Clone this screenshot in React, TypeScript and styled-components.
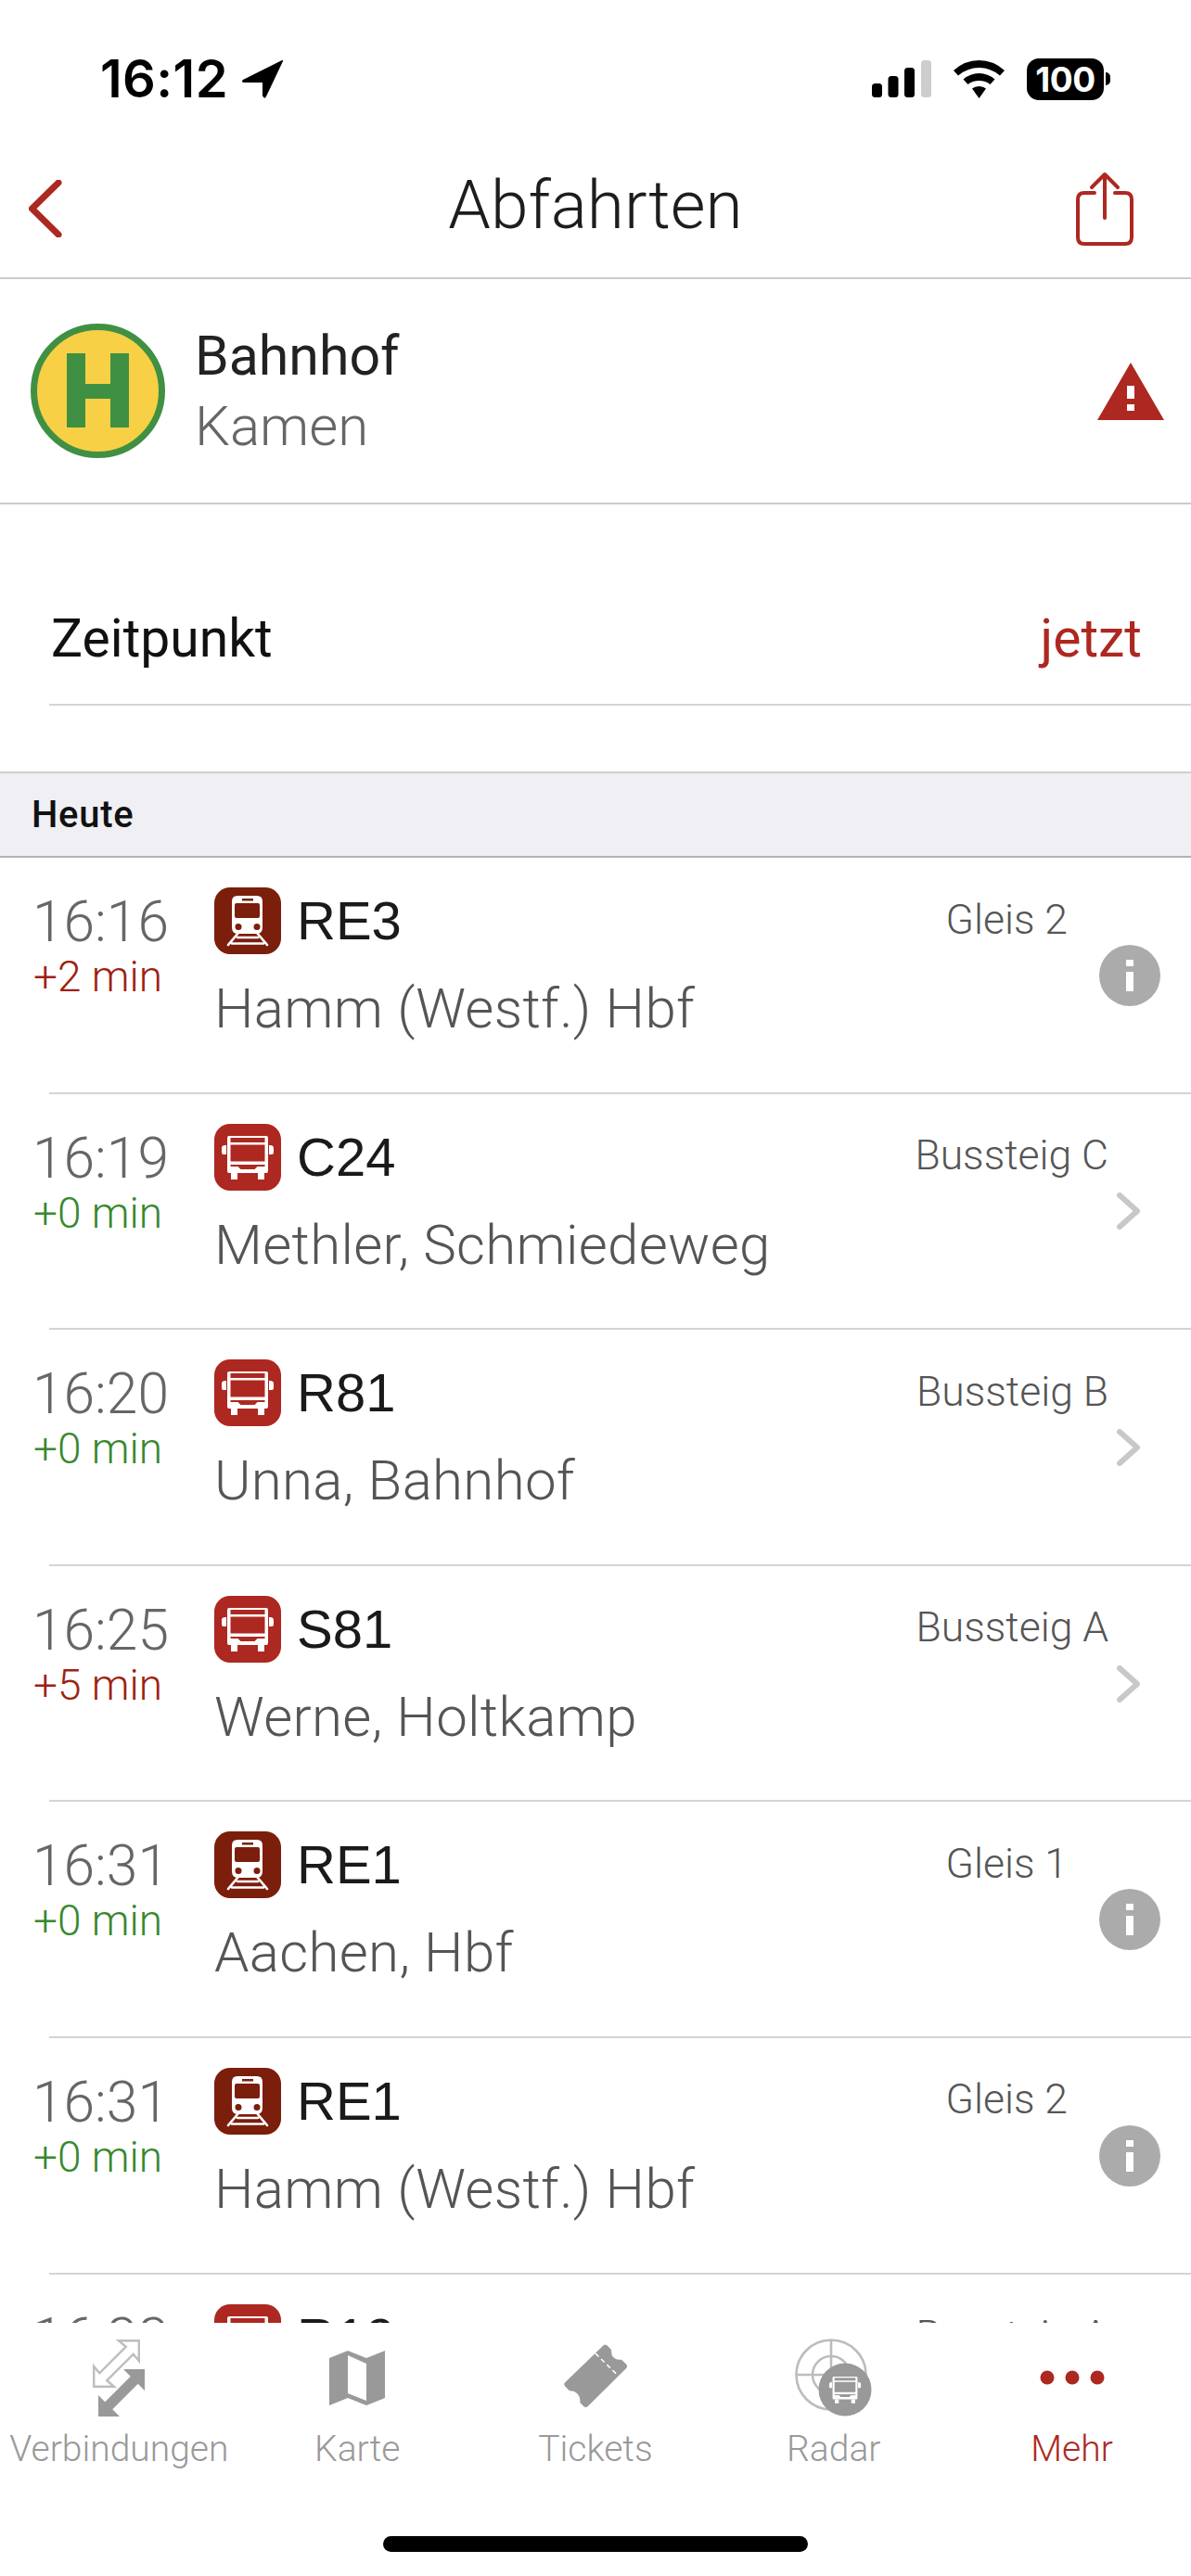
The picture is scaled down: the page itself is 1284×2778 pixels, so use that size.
import styled, { createGlobalStyle } from "styled-components"

const RED = "#ad2821"

const GlobalStyle = createGlobalStyle`
   html, body {
      margin: 0;
      padding: 0;
      background: white;
   }
   body {
      font-family: Roboto, "Liberation Sans", sans-serif;
      font-weight: 300;
   }
`

const Page = styled.div`
   width: 1284px;
   height: 2778px;
   display: flex;
   flex-direction: column;
   overflow: hidden;
   background: white;
`

/* Status bar */
const StatusBar = styled.div`
   height: 170px;
   flex: none;
   box-sizing: border-box;
   padding: 0 87px 0 108px;
   display: flex;
   align-items: center;
   justify-content: space-between;
`
const StatusLeft = styled.div`
   display: flex;
   align-items: center;
   gap: 14px;
`
const Clock = styled.span`
   font-family: Inter, sans-serif;
   font-weight: 600;
   font-size: 56px;
   letter-spacing: 0.4px;
   color: black;
`
const StatusRight = styled.div`
   display: flex;
   align-items: center;
   gap: 24px;
`
const BatteryWrap = styled.div`
   display: flex;
   align-items: center;
   gap: 2px;
`
const Battery = styled.div`
   width: 83px;
   height: 45px;
   border-radius: 13px;
   background: black;
   color: white;
   display: flex;
   align-items: center;
   justify-content: center;
   font-family: Inter, sans-serif;
   font-weight: 700;
   font-size: 37px;
   letter-spacing: -0.5px;
`
const BatteryNub = styled.div`
   width: 5px;
   height: 14px;
   border-radius: 0 7px 7px 0;
   background: black;
`

/* Navigation */
const NavBar = styled.div`
   height: 131px;
   flex: none;
   box-sizing: border-box;
   padding: 0 0 20px;
   display: grid;
   grid-template-columns: 1fr auto 1fr;
   align-items: center;
   border-bottom: 2px solid #cbcbcb;
`
const NavSide = styled.div<{ $end?: boolean }>`
   display: flex;
   justify-content: ${props => (props.$end ? "flex-end" : "flex-start")};
   padding: 0 ${props => (props.$end ? "62px" : "0")} 0 ${props => (props.$end ? "0" : "31px")};
`
const NavTitle = styled.h1`
   margin: 0 0 8px;
   font-size: 73px;
   font-weight: 300;
   color: #1d1d1d;
`

/* Station header */
const StationHeader = styled.div`
   height: 243px;
   flex: none;
   box-sizing: border-box;
   padding: 0 29px 0 33px;
   display: flex;
   align-items: center;
   border-bottom: 2px solid #cbcbcb;
`
const StationNames = styled.div`
   flex: 1;
   margin-left: 32px;
   display: flex;
   flex-direction: column;
`
const StationName = styled.span`
   font-size: 59px;
   line-height: 76px;
   font-weight: 400;
   color: #222;
`
const StationCity = styled.span`
   font-size: 60px;
   line-height: 76px;
   color: #666;
`

/* Zeitpunkt */
const TimeRow = styled.div`
   height: 215px;
   flex: none;
   box-sizing: border-box;
   padding: 107px 53px 0 55px;
   display: flex;
   align-items: flex-start;
   justify-content: space-between;
   font-size: 57px;
   line-height: 76px;
`
const TimeLabel = styled.span`
   color: #111;
   font-weight: 400;
`
const TimeValue = styled.span`
   color: ${RED};
   font-weight: 400;
`
const Divider = styled.div`
   height: 2px;
   flex: none;
   margin-left: 53px;
   background: #d4d4d4;
`
const SectionGap = styled.div`
   height: 71px;
   flex: none;
`
const SectionHeader = styled.div`
   height: 93px;
   flex: none;
   box-sizing: border-box;
   padding-left: 34px;
   display: flex;
   align-items: center;
   background: #efeff4;
   border-top: 2px solid #cfcfcf;
   border-bottom: 2px solid #b2b2b2;
   font-size: 40px;
   letter-spacing: 0.7px;
   font-weight: 500;
   color: #111;
`

/* Departures */
const List = styled.div`
   flex: 1;
   min-height: 0;
   overflow: hidden;
`
const Row = styled.div`
   height: 252.6px;
   box-sizing: border-box;
   padding: 32px 0 0 35px;
   display: flex;
`
const TimeCol = styled.div`
   width: 196px;
   flex: none;
   display: flex;
   flex-direction: column;
`
const Departure = styled.span`
   font-size: 60.5px;
   line-height: 76px;
   color: #666;
`
const Delay = styled.span<{ $late: boolean }>`
   margin-top: -3px;
   padding-left: 1px;
   font-size: 46px;
   line-height: 46px;
   font-weight: 300;
   color: ${props => (props.$late ? "#a01f12" : "#38882f")};
`
const MainCol = styled.div`
   flex: 1;
   min-width: 0;
   display: flex;
   flex-direction: column;
`
const TopLine = styled.div`
   height: 72px;
   display: flex;
   align-items: center;
`
const Badge = styled.div<{ $kind: "train" | "bus" }>`
   width: 72px;
   height: 72px;
   flex: none;
   border-radius: 17px;
   background: ${props => (props.$kind === "train" ? "#7b1e0c" : RED)};
   display: flex;
   align-items: center;
   justify-content: center;
`
const LineName = styled.span`
   margin-left: 17px;
   flex: 1;
   font-family: "Liberation Sans", sans-serif;
   font-size: 58px;
   line-height: 72px;
   font-weight: 400;
   color: #1a1a1a;
`
const Platform = styled.span`
   font-size: 44.5px;
   line-height: 72px;
   margin-bottom: 3px;
   color: #555;
`
const Destination = styled.div`
   margin-top: 25px;
   font-size: 60px;
   letter-spacing: 0.3px;
   line-height: 68px;
   color: #555;
   white-space: nowrap;
`
const Accessory = styled.div<{ $kind: "info" | "more" }>`
   width: ${props => (props.$kind === "info" ? "66px" : "25px")};
   margin: ${props => (props.$kind === "info" ? "0 33px 0 34px" : "0 55px 0 9px")};
   flex: none;
   align-self: stretch;
   padding-bottom: 31px;
   display: flex;
   align-items: center;
   justify-content: center;
`
const InfoDot = styled.div`
   width: 66px;
   height: 66px;
   border-radius: 50%;
   background: #ababab;
   display: flex;
   align-items: center;
   justify-content: center;
`

/* Tab bar */
const TabBar = styled.div`
   height: 273px;
   flex: none;
   box-sizing: border-box;
   padding: 17px 0 26px;
   display: flex;
   flex-direction: column;
   align-items: center;
   background: white;
`
const Tabs = styled.div`
   width: 100%;
   display: grid;
   grid-template-columns: repeat(5, 1fr);
`
const Tab = styled.div<{ $active?: boolean }>`
   display: flex;
   flex-direction: column;
   align-items: center;
   color: ${props => (props.$active ? RED : "#999")};
`
const TabIcon = styled.div`
   height: 84px;
   display: flex;
   align-items: center;
   justify-content: center;
`
const TabLabel = styled.span`
   margin-top: 10px;
   font-size: 39px;
   line-height: 50px;
   white-space: nowrap;
`
const HomeIndicator = styled.div`
   width: 458px;
   height: 17px;
   margin-top: auto;
   border-radius: 9px;
   background: black;
`

function TrainGlyph() {
   return (
      <svg width="72" height="72" viewBox="0 0 72 72">
         <path fill="white" fillRule="evenodd" d="M25 9h21q6 0 6 6v28q0 7-6 7H25q-6 0-6-7V15q0-6 6-6Zm5 3v2.500h12V12Zm-6 5q-2 0-2 2v12q0 2 2 2h23q2 0 2-2V19q0-2-2-2ZM26 39a3.500 3.500 0 1 0 0 7a3.500 3.500 0 0 0 0-7Zm20 0a3.500 3.500 0 1 0 0 7a3.500 3.500 0 0 0 0-7Z" />
         <path stroke="white" strokeWidth="2.600" strokeLinecap="round" fill="none" d="M26 49 15 62M46 49l11 13M25 54h22M19 60.500h34" />
      </svg>
   )
}

function BusGlyph() {
   return (
      <svg width="72" height="72" viewBox="0 0 72 72">
         <path fill="white" fillRule="evenodd" d="M16 13h40q2 0 2 2v36q0 2-2 2H16q-2 0-2-2V15q0-2 2-2Zm1.500 2V20h37v-5Zm0 7.500v18h37v-18ZM17.500 44v2h8l3 3h15l3-3h8v-2Z" />
         <path fill="white" d="M8 26q0-3 4-3h1v10h-3q-2 0-2-2ZM64 26q0-3-4-3h-1v10h3q2 0 2-2ZM18 53h7v7h-7ZM47 53h7v7h-7Z" />
      </svg>
   )
}

function LocationArrow() {
   return (
      <svg width="45" height="42" viewBox="0 0 45 42">
         <path fill="black" d="M44 1 2 22q-3 3 2 3h19v14q2 5 4 1L45 2Q45 0 44 1Z" />
      </svg>
   )
}

function SignalBars() {
   return (
      <svg width="64" height="40" viewBox="0 0 64 40">
         <rect x="0" y="25" width="11" height="15" rx="3.500" fill="black" />
         <rect x="17.500" y="17" width="11" height="23" rx="3.500" fill="black" />
         <rect x="35" y="8" width="11" height="32" rx="3.500" fill="black" />
         <rect x="53" y="0" width="11" height="40" rx="3.500" fill="#cdcdcd" />
      </svg>
   )
}

function Wifi() {
   return (
      <svg width="55" height="41" viewBox="0 0 55 41">
         <path fill="black" d="M27.500 0Q43 0 55 11l-5 5.500Q40 8 27.500 8T5 16.500L0 11Q12 0 27.500 0Z" />
         <path fill="black" d="M27.500 14q9.500 0 17 6.500l-5 5.500q-5-4-12-4t-12 4l-5-5.500q7.500-6.500 17-6.500Z" />
         <path fill="black" d="M27.500 28q4.500 0 7.500 2.500L27.500 41 20 30.500q3-2.500 7.500-2.500Z" />
      </svg>
   )
}

function BackChevron() {
   return (
      <svg width="36" height="62" viewBox="0 0 36 62">
         <path d="M32 3 3.500 31 32 59" fill="none" stroke={RED} strokeWidth="7" strokeLinecap="round" strokeLinejoin="round" />
      </svg>
   )
}

function ShareIcon() {
   return (
      <svg width="62" height="80" viewBox="0 0 62 80">
         <g fill="none" stroke={RED} strokeWidth="4" strokeLinecap="round" strokeLinejoin="round">
            <path d="M20 23H9q-7 0-7 7v41q0 7 7 7h44q7 0 7-7V30q0-7-7-7H42" />
            <path d="M31 3v47M17 17 31 3l14 14" />
         </g>
      </svg>
   )
}

function StopSign() {
   return (
      <svg width="145" height="145" viewBox="0 0 145 145">
         <circle cx="72.500" cy="72.500" r="69" fill="#f7d046" stroke="#409043" strokeWidth="7" />
         <path fill="#409043" d="M39 32h20v33h27V32h20v80H86V81H59v31H39Z" />
      </svg>
   )
}

function WarningIcon() {
   return (
      <svg width="72" height="62" viewBox="0 0 72 62">
         <path d="M36 0 72 62H0Z" fill={RED} />
         <path d="M32 25h8v14h-8ZM32 45h8v7h-8Z" fill="white" />
      </svg>
   )
}

function InfoGlyph() {
   return (
      <svg width="8" height="34" viewBox="0 0 8 34">
         <path fill="white" d="M0 0h8v7H0ZM0 13h8v21H0Z" />
      </svg>
   )
}

function ChevronRight() {
   return (
      <svg width="25" height="40" viewBox="0 0 25 40">
         <path d="M3 3 22 20 3 37" fill="none" stroke="#c8c8c8" strokeWidth="6" strokeLinecap="round" strokeLinejoin="round" />
      </svg>
   )
}

function ConnectionsIcon() {
   return (
      <svg width="56" height="83" viewBox="0 0 56 83">
         <polygon points="28,1.200 49.800,1.200 49.800,23 43.750,15.750 15.250,44.250 23,50.800 1.200,50.800 1.200,29 7.250,36.250 35.750,7.750" fill="white" stroke="#bdbdbd" strokeWidth="2.400" />
         <polygon points="33,32 56,32 56,55 48.750,47.750 21.250,75.250 29,83 6,83 6,60 13.250,67.250 40.750,39.750" fill="#999" />
      </svg>
   )
}

function MapIcon() {
   return (
      <svg width="60" height="59" viewBox="0 0 60 59">
         <path fill="#999" fillRule="evenodd" d="M0 8 20 0l20 8 20-8v51l-20 8-20-8-20 8ZM20 5v41l20 8V14Z" />
      </svg>
   )
}

function TicketIcon() {
   return (
      <svg width="72" height="72" viewBox="40 55 225 225">
         <path fill="#999" d="M180 58q6-3 12 2l13 13q2 7 2 17 8 20 33 17l16 15q6 8 0 14L126 265q-6 5-13 0l-13-13q3-17-8-30-12-12-27-10L50 197q-6-7 0-13Z" />
         <path d="M152 86l78 76" stroke="white" strokeWidth="5" strokeDasharray="16 11" fill="none" />
      </svg>
   )
}

function RadarIcon() {
   return (
      <svg width="84" height="84" viewBox="0 0 84 84">
         <g fill="none" stroke="#bcbcbc" strokeWidth="2.600">
            <circle cx="39" cy="39" r="37.500" />
            <circle cx="39" cy="39" r="20" />
            <path d="M39 1.500v37.500M1.500 39H39" />
         </g>
         <circle cx="54" cy="55" r="28.500" fill="#999" />
         <svg x="32" y="33" width="44" height="44" viewBox="0 0 72 72">
            <path fill="white" fillRule="evenodd" d="M16 13h40q2 0 2 2v36q0 2-2 2H16q-2 0-2-2V15q0-2 2-2Zm1.500 2V20h37v-5Zm0 7.500v18h37v-18ZM17.500 44v2h8l3 3h15l3-3h8v-2Z" />
            <path fill="white" d="M8 26q0-3 4-3h1v10h-3q-2 0-2-2ZM64 26q0-3-4-3h-1v10h3q2 0 2-2ZM18 53h7v7h-7ZM47 53h7v7h-7Z" />
         </svg>
      </svg>
   )
}

function DotsIcon() {
   return (
      <svg width="70" height="16" viewBox="0 0 70 16">
         <circle cx="8" cy="8" r="7.500" fill={RED} />
         <circle cx="35" cy="8" r="7.500" fill={RED} />
         <circle cx="62" cy="8" r="7.500" fill={RED} />
      </svg>
   )
}

const departures = [
   { time: "16:16", delay: 2, line: "RE3", kind: "train", dest: "Hamm (Westf.) Hbf", platform: "Gleis 2" },
   { time: "16:19", delay: 0, line: "C24", kind: "bus", dest: "Methler, Schmiedeweg", platform: "Bussteig C" },
   { time: "16:20", delay: 0, line: "R81", kind: "bus", dest: "Unna, Bahnhof", platform: "Bussteig B" },
   { time: "16:25", delay: 5, line: "S81", kind: "bus", dest: "Werne, Holtkamp", platform: "Bussteig A" },
   { time: "16:31", delay: 0, line: "RE1", kind: "train", dest: "Aachen, Hbf", platform: "Gleis 1" },
   { time: "16:31", delay: 0, line: "RE1", kind: "train", dest: "Hamm (Westf.) Hbf", platform: "Gleis 2" },
   { time: "16:33", delay: 0, line: "R19", kind: "bus", dest: "Kamen, Bahnhof", platform: "Bussteig A" },
] as const

export default function App() {
   return (
      <Page>
         <GlobalStyle />
         <StatusBar>
            <StatusLeft>
               <Clock>16:12</Clock>
               <LocationArrow />
            </StatusLeft>
            <StatusRight>
               <SignalBars />
               <Wifi />
               <BatteryWrap>
                  <Battery>100</Battery>
                  <BatteryNub />
               </BatteryWrap>
            </StatusRight>
         </StatusBar>

         <NavBar>
            <NavSide>
               <BackChevron />
            </NavSide>
            <NavTitle>Abfahrten</NavTitle>
            <NavSide $end>
               <ShareIcon />
            </NavSide>
         </NavBar>

         <StationHeader>
            <StopSign />
            <StationNames>
               <StationName>Bahnhof</StationName>
               <StationCity>Kamen</StationCity>
            </StationNames>
            <WarningIcon />
         </StationHeader>

         <TimeRow>
            <TimeLabel>Zeitpunkt</TimeLabel>
            <TimeValue>jetzt</TimeValue>
         </TimeRow>
         <Divider />
         <SectionGap />
         <SectionHeader>Heute</SectionHeader>

         <List>
            {departures.map((d, i) => (
               <div key={i}>
                  <Row>
                     <TimeCol>
                        <Departure>{d.time}</Departure>
                        <Delay $late={d.delay > 0}>+{d.delay} min</Delay>
                     </TimeCol>
                     <MainCol>
                        <TopLine>
                           <Badge $kind={d.kind}>{d.kind === "train" ? <TrainGlyph /> : <BusGlyph />}</Badge>
                           <LineName>{d.line}</LineName>
                           <Platform>{d.platform}</Platform>
                        </TopLine>
                        <Destination>{d.dest}</Destination>
                     </MainCol>
                     {d.kind === "train" ? (
                        <Accessory $kind="info">
                           <InfoDot>
                              <InfoGlyph />
                           </InfoDot>
                        </Accessory>
                     ) : (
                        <Accessory $kind="more">
                           <ChevronRight />
                        </Accessory>
                     )}
                  </Row>
                  <Divider />
               </div>
            ))}
         </List>

         <TabBar>
            <Tabs>
               <Tab>
                  <TabIcon><ConnectionsIcon /></TabIcon>
                  <TabLabel>Verbindungen</TabLabel>
               </Tab>
               <Tab>
                  <TabIcon><MapIcon /></TabIcon>
                  <TabLabel>Karte</TabLabel>
               </Tab>
               <Tab>
                  <TabIcon><TicketIcon /></TabIcon>
                  <TabLabel>Tickets</TabLabel>
               </Tab>
               <Tab>
                  <TabIcon><RadarIcon /></TabIcon>
                  <TabLabel>Radar</TabLabel>
               </Tab>
               <Tab $active>
                  <TabIcon><DotsIcon /></TabIcon>
                  <TabLabel>Mehr</TabLabel>
               </Tab>
            </Tabs>
            <HomeIndicator />
         </TabBar>
      </Page>
   )
}
